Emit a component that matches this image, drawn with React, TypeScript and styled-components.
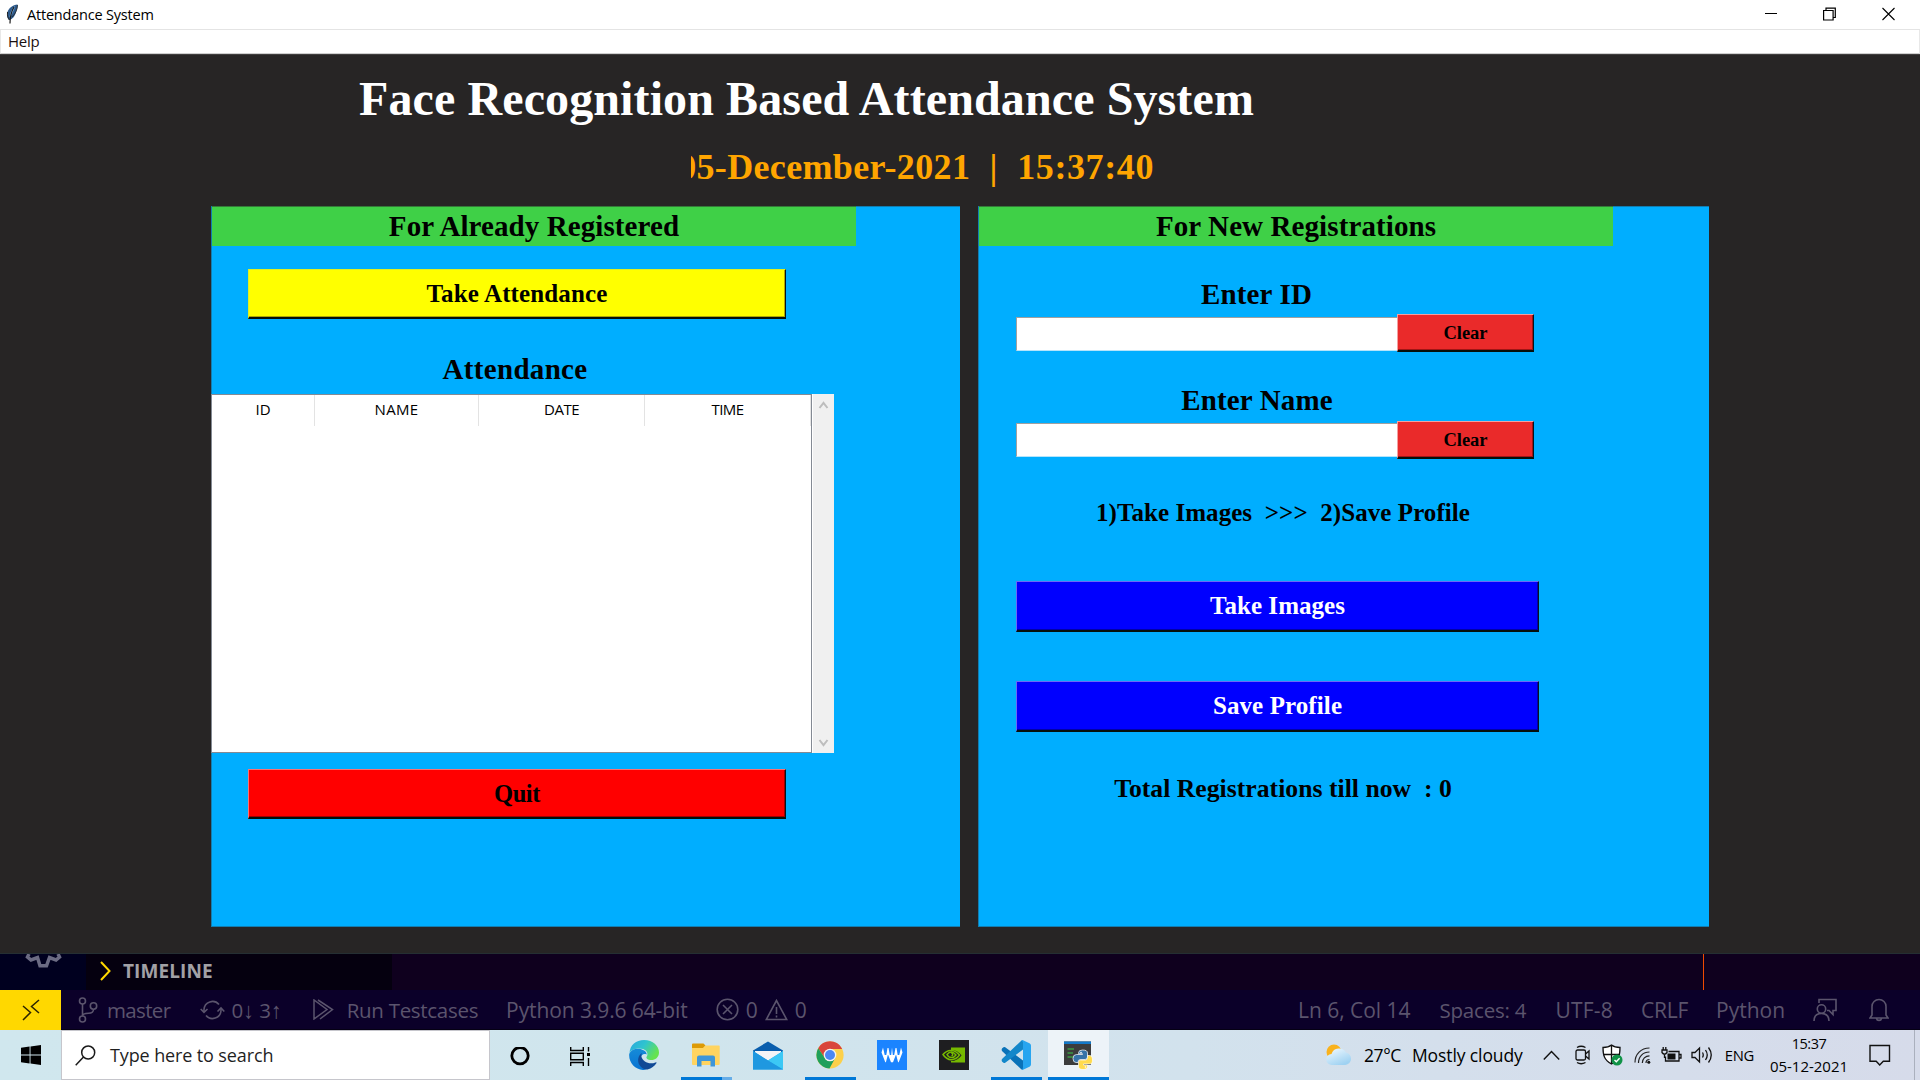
import React from 'react';
import styled, { createGlobalStyle } from 'styled-components';

const serif = '"Liberation Serif", "Times New Roman", serif';
const sans = '"Open Sans", "Noto Sans", sans-serif';

const GlobalStyle = createGlobalStyle`
  * { box-sizing: border-box; }
  body { margin: 0; overflow: hidden; background: #272525; font-family: ${sans}; }
  svg { display: block; flex: none; }
`;

const Screen = styled.div`
  width: 1920px;
  height: 1080px;
  display: flex;
  flex-direction: column;
`;

/* ---------- window chrome ---------- */

const TitleBar = styled.header`
  display: flex;
  align-items: center;
  height: 30px;
  padding: 0 25px 1px 6px;
  background: #fff;
  border-bottom: 1px solid #e4e4e4;
`;

const Text = styled.span<{ $size: number; $ls?: number; $ml?: number; $color?: string }>`
  font-family: ${sans};
  font-size: ${p => p.$size}px;
  letter-spacing: ${p => p.$ls ?? 0}px;
  margin-left: ${p => p.$ml ?? 0}px;
  color: ${p => p.$color ?? '#000'};
  white-space: pre;
`;

const WindowButtons = styled.div`
  display: flex;
  gap: 46px;
  margin-left: auto;
`;

const MenuBar = styled.nav`
  display: flex;
  align-items: center;
  height: 24px;
  padding-bottom: 2px;
  background: #fff;
  border: 1px solid #e8e8e8;
  border-top: 0;
  border-bottom: 1px solid #cfcfcf;
`;

const Client = styled.main`
  height: 900px;
  padding-top: 14px;
  background: #272525;
  border-top: 1px solid #403e3e;
  border-bottom: 1px solid #252f33;
`;

const PageTitle = styled.h1`
  margin: 0 0 17px;
  padding-left: 359px;
  height: 59px;
  font: bold 48px/59px ${serif};
  letter-spacing: 0.11px;
  color: #fff;
  white-space: nowrap;
`;

const Clock = styled.div`
  display: flex;
  justify-content: flex-end;
  width: 463px;
  height: 44px;
  margin-left: 691px;
  overflow: hidden;
  font: bold 36px/45px ${serif};
  letter-spacing: 0.6px;
  color: #ffa500;
  white-space: pre;
`;

const DatePart = styled.span`
  letter-spacing: 0.35px;
`;

/* ---------- panels ---------- */

const Panels = styled.div`
  display: flex;
  gap: 18px;
  margin: 17px 0 0 211px;
`;

const Panel = styled.section<{ $width: number }>`
  width: ${p => p.$width}px;
  height: 721px;
  background: #00aeff;
  border: 1px solid #127db0;
  border-right: 0;
`;

const Heading = styled.h2<{ $width: number; $ls: number }>`
  width: ${p => p.$width}px;
  height: 40px;
  margin: -1px 0 0;
  border-top: 1px solid #367a3a;
  background: #3fd047;
  font: bold 29px/39px ${serif};
  letter-spacing: ${p => p.$ls}px;
  color: #000;
  text-align: center;
`;

const Caption = styled.div<{ $width: number; $top: number; $size?: number; $line?: number; $ls?: number }>`
  width: ${p => p.$width}px;
  margin-top: ${p => p.$top}px;
  font: bold ${p => p.$size ?? 29}px/${p => p.$line ?? 40}px ${serif};
  letter-spacing: ${p => p.$ls ?? 0}px;
  color: #000;
  text-align: center;
  white-space: pre;
`;

const Button = styled.button<{ $bg: string; $light: string; $dark: string; $color?: string; $width: number; $height?: number; $top?: number; $size?: number; $ls?: number }>`
  display: block;
  flex: none;
  width: ${p => p.$width}px;
  height: ${p => p.$height ?? 50}px;
  margin: ${p => p.$top ?? 0}px 0 0;
  padding: 0;
  border: 1px solid ${p => p.$light};
  border-right-color: #06141c;
  border-bottom: 2px solid #06100c;
  border-radius: 0;
  box-shadow: inset -1px -1px 0 ${p => p.$dark};
  background: ${p => p.$bg};
  color: ${p => p.$color ?? '#000'};
  font: bold ${p => p.$size ?? 25}px/30px ${serif};
  letter-spacing: ${p => p.$ls ?? 0}px;
`;

const Inset = styled.div<{ $left: number }>`
  padding-left: ${p => p.$left}px;
`;

const TableBox = styled.div`
  display: flex;
  width: 623px;
  height: 359px;
  margin: 5px 0 0 -1px;
`;

const Table = styled.div`
  width: 601px;
  background: #fff;
  border: 1px solid #848a94;
`;

const TableHead = styled.div`
  display: grid;
  grid-template-columns: 103px 164px 166px 166px;
  height: 31px;
`;

const HeadCell = styled.div<{ $ls: number }>`
  border-right: 1px solid #e3e3e3;
  font: 15px/29px ${sans};
  letter-spacing: ${p => p.$ls}px;
  color: #000;
  text-align: center;
`;

const Scrollbar = styled.div`
  display: flex;
  flex-direction: column;
  align-items: center;
  justify-content: space-between;
  width: 22px;
  padding: 7px 1px 6px 0;
  background: #f0f0f0;
  border-left: 1px solid #fff;
`;

const FieldRow = styled.div<{ $top?: number; $entryTop: number }>`
  display: flex;
  align-items: flex-start;
  margin-top: ${p => p.$top ?? 0}px;
  padding-left: 37px;
  height: 38px;
  > input { margin-top: ${p => p.$entryTop}px; }
`;

const Entry = styled.input`
  flex: none;
  width: 381px;
  height: 34px;
  padding: 0 4px;
  border: 1px solid #a0a0a0;
  border-right: 0;
  border-bottom-color: #b5e4fb;
  border-radius: 0;
  background: #fff;
`;

/* ---------- editor strip behind the window ---------- */

const EditorStrip = styled.div`
  display: flex;
  height: 36px;
  background: #0f001e;
`;

const ActivityBar = styled.div`
  width: 86px;
  padding-left: 25px;
  background: #00001f;
`;

const Timeline = styled.div`
  display: flex;
  align-items: center;
  width: 306px;
  padding: 0 0 3px 14px;
  background: #05000f;
  font: bold 19px/24px ${sans};
`;

const Ruler = styled.div`
  width: 1px;
  margin-left: 1311px;
  background: #f04a00;
`;

const StatusBar = styled.div`
  display: flex;
  align-items: center;
  height: 40px;
  background: #0b0029;
  border-bottom: 1px solid #050014;
  color: #5b546d;
`;

const Remote = styled.div`
  display: flex;
  align-items: center;
  justify-content: center;
  width: 61px;
  height: 40px;
  margin-right: 17px;
  background: #ffd800;
`;

const Arrow = styled.span`
  font-family: "Liberation Sans", sans-serif;
  font-size: 22px;
`;

const StatusIcon = styled.span<{ $ml: number }>`
  margin-left: ${p => p.$ml}px;
`;

const Spacer = styled.div`
  flex: 1;
`;

const StatusRight = styled.div`
  display: flex;
  align-items: center;
  width: 622px;
`;

/* ---------- taskbar ---------- */

const Taskbar = styled.footer`
  display: flex;
  height: 50px;
  background: linear-gradient(90deg, #d0e7ee 0%, #d0e5ed 35%, #d2e2ed 62%, #d4dfec 75%, #d6dbea 100%);
`;

const StartCell = styled.div`
  display: flex;
  align-items: center;
  justify-content: center;
  width: 61px;
`;

const Search = styled.div`
  display: flex;
  align-items: center;
  width: 429px;
  padding-left: 13px;
  background: #fff;
  border: 1px solid #c6c6cc;
`;

const AppCell = styled.div<{ $width?: number; $active?: boolean; $ml?: number }>`
  display: flex;
  flex-direction: column;
  align-items: center;
  width: ${p => p.$width ?? 62}px;
  margin-left: ${p => p.$ml ?? 0}px;
  background: ${p => (p.$active ? '#edf3f8' : 'transparent')};
`;

const IconBox = styled.div`
  display: flex;
  align-items: center;
  justify-content: center;
  flex: 1;
  padding-top: 3px;
`;

const Underline = styled.div<{ $width: number; $stack?: boolean }>`
  width: ${p => p.$width}px;
  height: 3px;
  background: ${p => (p.$width === 0 ? 'transparent' : '#0078d7')};
  border-right: ${p => (p.$stack ? '10px solid #66ade8' : '0')};
`;

const Tray = styled.div`
  display: flex;
  align-items: center;
  flex: 1;
`;

const TrayIcon = styled.div<{ $ml: number }>`
  margin-left: ${p => p.$ml}px;
`;

const DateTime = styled.div`
  display: flex;
  flex-direction: column;
  align-items: center;
  width: 78px;
  margin-left: 16px;
  line-height: 23px;
`;

const ShowDesktop = styled.div`
  width: 6px;
  height: 50px;
  margin-left: auto;
  border-left: 1px solid #aab0bd;
`;

/* ---------- icons ---------- */

const Feather = () => (
  <svg width="12" height="20" viewBox="0 0 12 20">
    <path d="M11.500 .5C7 1 2.500 4 1.300 8.500.6 12 1.200 14 3 16c4-1 6-4 7-8C11 5 12 3 11.500.5z" fill="#2d5a8c" />
    <path d="M9 2C6 4 4 8 3.500 13l2-2C7 8 8.500 5 9 2z" fill="#7fb0dc" />
    <path d="M8 3C5 8 4 13 4 19.500" stroke="#1b1b1b" strokeWidth="1.200" fill="none" />
    <path d="M1.500 8C1.200 12 2 14 3.500 16" stroke="#222" fill="none" />
    <path d="M11.500 1c0 4-2 9-5.500 12" stroke="#222" strokeWidth=".8" fill="none" />
  </svg>
);

const Branch = () => (
  <svg width="20" height="26" viewBox="0 0 20 26" fill="none" stroke="currentColor" strokeWidth="1.600">
    <circle cx="4.500" cy="4" r="3" /><circle cx="4.500" cy="22" r="3" /><circle cx="15.500" cy="9" r="3.200" />
    <path d="M4.500 7v12M15.500 12.200c0 3.300-2 4-5 4-4 0-6 1-6 3" />
  </svg>
);

const Sync = () => (
  <svg width="25" height="20" viewBox="0 0 25 20" fill="none" stroke="currentColor" strokeWidth="1.600">
    <path d="M4 12V9.500a8.500 8.500 0 0 1 15-5M21 8v2.500a8.500 8.500 0 0 1-15 5" />
    <path d="M.7 9 4 12.300 7.500 9M17.500 11.500 21 8l3.300 3.500" />
  </svg>
);

const RunAll = () => (
  <svg width="21" height="21" viewBox="0 0 21 21" fill="none" stroke="currentColor" strokeWidth="1.500">
    <path d="M1 1v19l13-9.500zM5 1l14.500 9.500L7 20" />
  </svg>
);

const ErrorIcon = () => (
  <svg width="23" height="23" viewBox="0 0 23 23" fill="none" stroke="currentColor" strokeWidth="1.600">
    <circle cx="11.500" cy="11.500" r="10.300" /><path d="m7 7 9 9m0-9-9 9" />
  </svg>
);

const WarnIcon = () => (
  <svg width="23" height="22" viewBox="0 0 23 22" fill="none" stroke="currentColor" strokeWidth="1.600">
    <path d="M11.500 1.500 1.300 20.500h20.400zM11.500 8v7M11.500 16.500v2" />
  </svg>
);

const Feedback = () => (
  <svg width="24" height="24" viewBox="0 0 24 24" fill="none" stroke="currentColor" strokeWidth="1.600">
    <path d="M6 5V1.500h17v11h-3v4l-4-4h-2" />
    <circle cx="8.500" cy="11" r="4.200" /><path d="M1 23c0-5 3-7.500 7.500-7.500S16 18 16 23" />
  </svg>
);

const Bell = () => (
  <svg width="20" height="24" viewBox="0 0 20 24" fill="none" stroke="currentColor" strokeWidth="1.600">
    <path d="M3 17V8.500a7 7 0 0 1 14 0V17l2 3H1zM7.500 20.500c.5 2.500 4.500 2.500 5 0" />
  </svg>
);

const Edge = () => (
  <svg width="30" height="30" viewBox="0 0 30 30">
    <defs>
      <linearGradient id="eg" x1="0" y1="0" x2="1" y2=".5"><stop offset="0" stopColor="#2aa6df" /><stop offset=".5" stopColor="#2fc4cf" /><stop offset="1" stopColor="#66e34f" /></linearGradient>
      <linearGradient id="eb" x1="0" y1="0" x2="0" y2="1"><stop offset="0" stopColor="#168bd8" /><stop offset="1" stopColor="#0873d2" /></linearGradient>
    </defs>
    <path d="M.5 13C1 5 7 0 15 0c9 0 15 6 15 12.500 0 5-4 7.500-7.500 7.500-4 0-5.500-1.500-5-3 2-2.500 1-6.500-3.500-8C9 7.500 2.500 9 .5 13z" fill="url(#eg)" />
    <path d="M.2 14C2 9.500 7 8 11.500 9c4 1 6.500 3.500 6 5.500C14 13 11 16 12 20c1 4 5 6 9 6-2 3-5 4-7 3.900C6 29.500-.5 22.500.2 14z" fill="url(#eb)" />
    <path d="M13 13c-4 2.500-5 8-2.500 12 2 3.500 5.500 4.800 8 4.500 4-.8 7-3.500 9-6.500.3-.8-.3-1-1-.6C20 25 14 21.500 12.500 17c-.3-1.500 0-3 .5-4z" fill="#114a96" />
  </svg>
);

const Explorer = () => (
  <svg width="28" height="24" viewBox="0 0 28 24">
    <path d="M0 1.500Q0 .5 1 .5h10.500l2 2-2 2.500H0z" fill="#dd9a05" />
    <path d="M0 5h11l2.500-2.500H27q.7 0 .7.700V21q0 1-1 1H1q-1 0-1-1z" fill="#ffd460" />
    <path d="M5 23.500v-9q0-2 2-2h14q2 0 2 2v9h-4.500V18h-9v5.500z" fill="#3e96d8" />
  </svg>
);

const Mail = () => (
  <svg width="30" height="29" viewBox="0 0 30 29">
    <path d="M0 9.500 15 .5l15 9v5H0z" fill="#0a5ead" />
    <path d="M2 10h26v8l-13 4L2 17z" fill="#f4f4f6" />
    <path d="M0 10l15 9.500L30 10v18.500H0z" fill="#28a8ea" />
    <path d="M30 10 15 19.500l15 9z" fill="#3cc8f5" />
    <path d="M0 28.500V10l15 9.500 15 9z" fill="#1f98e0" />
  </svg>
);

const Chrome = () => (
  <svg width="28" height="28" viewBox="0 0 28 28">
    <circle cx="14" cy="14" r="13.600" fill="#fcd04a" />
    <path d="M2.200 7.200A13.600 13.600 0 0 1 25.800 7.200L26 8H14L8.800 17z" fill="#d9453b" />
    <path d="M2.200 7.200A13.600 13.600 0 0 0 13.500 27.600L19.200 17 14 20 8.800 17z" fill="#1fa05b" />
    <circle cx="14" cy="14" r="6.300" fill="#f3f3f3" /><circle cx="14" cy="14" r="5" fill="#4a87f3" />
  </svg>
);

const Wave = () => (
  <svg width="30" height="30" viewBox="0 0 30 30">
    <rect width="30" height="30" fill="#1b84ff" />
    <path d="M4.500 12.500 6 7.500l1.700 7.500h1.600L10.500 8h1l1.300 7h1.400L15 7.500l.8 7.500h1.400L18.500 8h1l1.200 7h1.600L24 7.500l1.500 5-3.800 9.800h-.6L19.200 15h-.4L16 22.300h-2L11.200 15h-.4L8.900 22.300h-.6z" fill="#fff" />
  </svg>
);

const Nvidia = () => (
  <svg width="30" height="30" viewBox="0 0 30 30">
    <rect width="30" height="30" fill="#1e1e20" />
    <path d="M12 7.500h14v15H12z" fill="#76b900" />
    <path d="M12 10c5 0 9 3 10.500 5.500C20 19 16.500 21 12 21z" fill="#1e1e20" />
    <g fill="none" stroke="#76b900" strokeWidth="1.500">
      <path d="M4 14.500C8 9.500 15 8.500 20.500 15 16 21 8.500 21.500 4 14.500z" />
      <path d="M8 14.500c3-3.500 6-3.200 9 .5-2.500 3.500-7 3.500-9-.5z" />
      <path d="M12 12.800c2 0 2.500 2.500.5 3" />
    </g>
  </svg>
);

const VSCode = () => (
  <svg width="30" height="30" viewBox="0 0 30 30">
    <path d="M1.200 8.300 2.500 7.200q.8-.6 1.700 0L22 20.500V29.500Q21 30 20 29L1 11q-.8-1.500.2-2.700z" fill="#0a72b8" />
    <path d="M1.200 21.700 2.500 22.800q.8.600 1.700 0L22 9.500V.5Q21 0 20 1L1 19q-.8 1.500.2 2.700z" fill="#1387ca" />
    <path d="M22 .2 28.500 3.200Q30 4 30 5.500v19q0 1.500-1.500 2.300L22 29.800q-1 .2-2-.8 2 .8 2-1.500v-25Q22 .5 20 1q1-1 2-.8z" fill="#27a5f0" />
  </svg>
);

const PythonWindow = () => (
  <svg width="29" height="29" viewBox="0 0 29 29">
    <path d="M0 .5h27V24H0z" fill="#3c3c3c" /><path d="M0 .5h27V3H0z" fill="#1378c8" />
    <path d="M3.500 8h6.500M3.500 12H9M3.500 16h6" stroke="#3c9a43" strokeWidth="1.300" />
    <path d="M14.500 12q0-3 4-3 5 0 5 3v4q0 2.500-2.500 2.500h-5q-2 0-2 3h-2q-3 0-3-4t3.500-4h6v-.8h-4z" fill="#3673a8" stroke="#fff" strokeWidth=".7" />
    <path d="M23.500 14.500h2q3 0 3 4.500t-3 4h-6v1h4v1.500q0 3-4.500 3t-4.500-3V21q0-2 2.500-2h4.500q2 0 2-2.500z" fill="#ffdb4d" stroke="#fff" strokeWidth=".7" />
    <circle cx="17" cy="11.500" r=".8" fill="#fff" /><circle cx="21.500" cy="26" r=".8" fill="#fff" />
  </svg>
);

const Weather = () => (
  <svg width="26" height="22" viewBox="0 0 26 22">
    <defs><linearGradient id="cl" x1="0" y1="0" x2=".6" y2="1"><stop offset="0" stopColor="#f3faff" /><stop offset="1" stopColor="#9fd2f2" /></linearGradient></defs>
    <circle cx="8" cy="8" r="7.500" fill="#f9b21d" />
    <path d="M6 21a5.500 5.500 0 0 1-.5-11A8 8 0 0 1 20 8.500 6 6.300 0 0 1 19.500 21z" fill="url(#cl)" />
  </svg>
);

const ScrollArrow = ({ down }: { down?: boolean }) => (
  <svg width="11" height="8" viewBox="0 0 11 8">
    <path d={down ? 'M1.500 1 5.500 6.200 9.500 1' : 'M1.500 7 5.500 1.800 9.500 7'} fill="none" stroke="#bdbdbd" strokeWidth="2" />
  </svg>
);

/* ---------- sections ---------- */

const WindowChrome = () => (
  <>
    <TitleBar>
      <Feather />
      <Text $size={14.5} $ls={-0.2} $ml={9}>Attendance System</Text>
      <WindowButtons>
        <svg width="13" height="14" viewBox="0 0 13 14"><path d="M1 6.500h12" stroke="#000" /></svg>
        <svg width="13" height="14" viewBox="0 0 13 14" fill="none" stroke="#000" strokeWidth="1.200"><path d="M.6 3.500h9.500v9.500H.6zM3 3.500V1.200h9.300v9.300h-2.200" /></svg>
        <svg width="13" height="14" viewBox="0 0 13 14"><path d="m.5 1 12 12m0-12-12 12" stroke="#000" strokeWidth="1.100" /></svg>
      </WindowButtons>
    </TitleBar>
    <MenuBar><Text $size={15} $ls={-0.25} $ml={7} $color="#1a1010">Help</Text></MenuBar>
  </>
);

const columns: [string, number][] = [['ID', 0], ['NAME', 0.3], ['DATE', -0.5], ['TIME', -0.6]];

const RegisteredPanel = () => (
  <Panel $width={749}>
    <Heading $width={644} $ls={0.09}>For Already Registered</Heading>
    <Inset $left={36}>
      <Button $bg="#ffff00" $light="#e0f020" $dark="#b0a800" $width={538} $top={23} $ls={0.12}>Take Attendance</Button>
    </Inset>
    <Caption $width={606} $top={30} $ls={0.33}>Attendance</Caption>
    <TableBox>
      <Table>
        <TableHead>
          {columns.map(([name, ls]) => <HeadCell key={name} $ls={ls}>{name}</HeadCell>)}
        </TableHead>
      </Table>
      <Scrollbar><ScrollArrow /><ScrollArrow down /></Scrollbar>
    </TableBox>
    <Inset $left={36}>
      <Button $bg="#ff0000" $light="#ff7070" $dark="#a00000" $width={538} $top={16} $size={24.5} $ls={-0.4}>Quit</Button>
    </Inset>
  </Panel>
);

const ClearButton = () => (
  <Button $bg="#ea2a2a" $light="#f4a0a0" $dark="#a01515" $width={137} $height={38} $size={18.5}>Clear</Button>
);

const NewPanel = () => (
  <Panel $width={731}>
    <Heading $width={634} $ls={0.1}>For New Registrations</Heading>
    <Caption $width={555} $top={28} $ls={0.15}>Enter ID</Caption>
    <FieldRow $entryTop={3}><Entry /><ClearButton /></FieldRow>
    <Caption $width={556} $top={28} $ls={0.15}>Enter Name</Caption>
    <FieldRow $top={1} $entryTop={2}><Entry /><ClearButton /></FieldRow>
    <Caption $width={608} $top={39} $size={25} $line={30} $ls={0.06}>{'1)Take Images  >>>  2)Save Profile'}</Caption>
    <Inset $left={37}>
      <Button $bg="#0000ff" $light="#6a6af5" $dark="#0000a8" $color="#fff" $width={523} $height={51} $top={53} $ls={0.05}>Take Images</Button>
      <Button $bg="#0000ff" $light="#6a6af5" $dark="#0000a8" $color="#fff" $width={523} $height={51} $top={49} $ls={0.1}>Save Profile</Button>
    </Inset>
    <Caption $width={608} $top={41} $size={25.65} $line={31} $ls={0.03}>{'Total Registrations till now  : 0'}</Caption>
  </Panel>
);

const grey = '#5b546d';

const Editor = () => (
  <>
    <EditorStrip>
      <ActivityBar>
        <svg width="37" height="14" viewBox="0 0 37 14" fill="none" stroke="#6b6b83" strokeWidth="3.500">
          <path d="M4 0 2.500 3 6 6l6.500-2.500L15 11.800h6.500L24.500 3.500 31 6l3.500-3L33 0" />
        </svg>
      </ActivityBar>
      <Timeline>
        <svg width="11" height="20" viewBox="0 0 11 20"><path d="m1 1 8.500 9L1 19" fill="none" stroke="#ffd800" strokeWidth="2" /></svg>
        <Text $size={19} $ls={0.1} $ml={12} $color="#a2a1a6">TIMELINE</Text>
      </Timeline>
      <Ruler />
    </EditorStrip>
    <StatusBar>
      <Remote>
        <svg width="18" height="22" viewBox="0 0 18 22" fill="none" stroke="#2a2400" strokeWidth="1.500"><path d="m1 7 7.500 6.500L1 21M17 1 9.500 7.500 17 14" /></svg>
      </Remote>
      <Branch />
      <Text $size={20.5} $ls={-0.65} $ml={9} $color={grey}>master</Text>
      <StatusIcon $ml={30}><Sync /></StatusIcon>
      <Text $size={20.5} $ls={-0.1} $ml={6} $color={grey}>0<Arrow>↓</Arrow> 3<Arrow>↑</Arrow></Text>
      <StatusIcon $ml={31}><RunAll /></StatusIcon>
      <Text $size={20.5} $ls={-0.3} $ml={13} $color={grey}>Run Testcases</Text>
      <Text $size={21} $ls={-0.1} $ml={28} $color={grey}>Python 3.9.6 64-bit</Text>
      <StatusIcon $ml={28}><ErrorIcon /></StatusIcon>
      <Text $size={21} $ml={7} $color={grey}>0</Text>
      <StatusIcon $ml={7}><WarnIcon /></StatusIcon>
      <Text $size={21} $ml={7} $color={grey}>0</Text>
      <Spacer />
      <StatusRight>
        <Text $size={21} $ls={-0.03} $color={grey}>Ln 6, Col 14</Text>
        <Text $size={20.5} $ls={-0.2} $ml={29} $color={grey}>Spaces: 4</Text>
        <Text $size={21} $ls={0.2} $ml={29} $color={grey}>UTF-8</Text>
        <Text $size={21} $ls={-0.2} $ml={28} $color={grey}>CRLF</Text>
        <Text $size={21} $ml={28} $color={grey}>Python</Text>
        <StatusIcon $ml={28}><Feedback /></StatusIcon>
        <StatusIcon $ml={32}><Bell /></StatusIcon>
      </StatusRight>
    </StatusBar>
  </>
);

const apps: { icon: React.ReactNode; line?: number; stack?: boolean; active?: boolean; width?: number }[] = [
  { icon: <Edge /> },
  { icon: <Explorer />, line: 51, stack: true },
  { icon: <Mail /> },
  { icon: <Chrome />, line: 51 },
  { icon: <Wave /> },
  { icon: <Nvidia /> },
  { icon: <VSCode />, line: 51 },
  { icon: <PythonWindow />, line: 61, active: true, width: 61 },
];

const TaskbarSection = () => (
  <Taskbar>
    <StartCell>
      <svg width="20" height="20" viewBox="0 0 20 20"><path d="M0 2.800 8.600 1.600v7.900H0zM9.500 1.500 20 0v9.500H9.500zM0 10.400h8.600v8L0 17.200zM9.500 10.400H20V20L9.500 18.500z" fill="#000" /></svg>
    </StartCell>
    <Search>
      <svg width="21" height="21" viewBox="0 0 21 21" fill="none" stroke="#1a1a1a" strokeWidth="1.500"><circle cx="13.200" cy="7.500" r="6.500" /><path d="M8.500 12 .7 20.200" /></svg>
      <Text $size={18} $ls={-0.12} $ml={14} $color="#1f1f1f">Type here to search</Text>
    </Search>
    <AppCell $width={60}>
      <IconBox><svg width="20" height="20" viewBox="0 0 20 20"><circle cx="10" cy="8.700" r="8.200" fill="none" stroke="#000" strokeWidth="2.800" /></svg></IconBox>
    </AppCell>
    <AppCell $width={60}>
      <IconBox>
        <svg width="21" height="22" viewBox="0 0 21 22" fill="none" stroke="#000" strokeWidth="1.400">
          <path d="M.7 1v3.500h12.600V1M.7 20v-3.500h12.600V20M.7 7.200h12.600v6.600H.7zM18.500 1v4.500M18.500 12v8" /><path d="M17 7h3v3h-3z" fill="#000" stroke="none" />
        </svg>
      </IconBox>
    </AppCell>
    {apps.map((a, i) => (
      <AppCell key={i} $active={a.active} $width={a.width} $ml={i === 0 ? 3 : i === 7 ? 1 : 0}>
        <IconBox>{a.icon}</IconBox>
        <Underline $width={a.line ?? 0} $stack={a.stack} />
      </AppCell>
    ))}
    <Tray>
      <TrayIcon $ml={217}><Weather /></TrayIcon>
      <Text $size={17.5} $ls={-0.4} $ml={12}>27°C</Text>
      <Text $size={17.5} $ls={-0.1} $ml={11}>Mostly cloudy</Text>
      <TrayIcon $ml={20}><svg width="17" height="11" viewBox="0 0 17 11"><path d="m.8 9.500 7.700-8 7.700 8" fill="none" stroke="#111" strokeWidth="1.400" /></svg></TrayIcon>
      <TrayIcon $ml={15}>
        <svg width="16" height="20" viewBox="0 0 16 20" fill="none" stroke="#111" strokeWidth="1.300"><rect x="1" y="5" width="9.500" height="10" rx="1.500" /><path d="m10.500 9 3.500-3v8l-3.500-3M2 2.500Q6 0 10.500 2.500M2 17.500q4 2.500 8.500 0" /></svg>
      </TrayIcon>
      <TrayIcon $ml={11}>
        <svg width="21" height="22" viewBox="0 0 21 22"><path d="M9.500 1C7 3 4 3.500 1 3.500 1 11 2 16 9.500 20 17 16 18 11 18 3.500 15 3.500 12 3 9.500 1z" fill="#fff" stroke="#111" strokeWidth="1.300" /><path d="M9.500 1v19M1 10.500h17" stroke="#111" strokeWidth="1.300" /><circle cx="15" cy="16" r="5.500" fill="#109347" /><path d="m12.500 16 1.800 1.800 3.300-3.600" fill="none" stroke="#fff" strokeWidth="1.400" /></svg>
      </TrayIcon>
      <TrayIcon $ml={11}>
        <svg width="17" height="17" viewBox="0 0 17 17" fill="none" stroke="#222" strokeWidth="1.200"><path d="M1 15.500C1 7 7 1 15.500 1M4.500 16C4.500 9.500 9 5 15.500 5M8.300 16c0-4 3-7.200 7.200-7.200M12 16c0-2 1.500-3.500 3.500-3.500" /><circle cx="14.800" cy="15.300" r="1.500" fill="#111" stroke="none" /></svg>
      </TrayIcon>
      <TrayIcon $ml={10}>
        <svg width="21" height="16" viewBox="0 0 21 16" fill="none" stroke="#111" strokeWidth="1.300"><path d="M7.500 4.500H18v9.500H4.500V9.500M18.500 7.500H20v3.500h-1.500" /><path d="M6.500 6.500h8v6h-8z" fill="#111" stroke="none" /><path d="M1 3h5v2.500Q3.500 9 1 5.500zM2.200 0v3M4.800 0v3M3.500 7v4" /></svg>
      </TrayIcon>
      <TrayIcon $ml={9}>
        <svg width="22" height="18" viewBox="0 0 22 18" fill="none" stroke="#111" strokeWidth="1.300"><path d="M1 6.500h3L8.500 2v14L4 11.500H1zM11.500 6.500q1.500 2.500 0 5M14.500 4q3.500 5 0 10M17.500 1.500q5.500 7.500 0 15" /></svg>
      </TrayIcon>
      <Text $size={14.8} $ls={-0.3} $ml={12}>ENG</Text>
      <DateTime>
        <Text $size={14.5} $ls={-0.5}>15:37</Text>
        <Text $size={15} $ls={-0.02}>05-12-2021</Text>
      </DateTime>
      <TrayIcon $ml={21}><svg width="22" height="22" viewBox="0 0 22 22"><path d="M1 1.500h19.500v15.800h-6.200L10.700 21l-3.500-3.700H1z" fill="none" stroke="#111" strokeWidth="1.400" /></svg></TrayIcon>
      <ShowDesktop />
    </Tray>
  </Taskbar>
);

export default function App() {
  return (
    <Screen>
      <GlobalStyle />
      <WindowChrome />
      <Client>
        <PageTitle>Face Recognition Based Attendance System</PageTitle>
        <Clock><DatePart>05-December-2021</DatePart>{'  |  15:37:40'}</Clock>
        <Panels>
          <RegisteredPanel />
          <NewPanel />
        </Panels>
      </Client>
      <Editor />
      <TaskbarSection />
    </Screen>
  );
}
